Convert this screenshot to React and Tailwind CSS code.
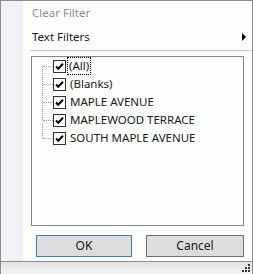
import { useState } from 'react';

const items = ['(All)', '(Blanks)', 'MAPLE AVENUE', 'MAPLEWOOD TERRACE', 'SOUTH MAPLE AVENUE'];

const CheckBox = ({ checked }) => (
  <svg width="13" height="13" viewBox="0 0 13 13" className="shrink-0">
    <rect x="0.5" y="0.5" width="12" height="12" fill="#ffffff" stroke="#333333" />
    {checked && (
      <path d="M3 6.5 L5.2 8.8 L10 3.8" fill="none" stroke="#000000" strokeWidth="2" />
    )}
  </svg>
);

const App = () => {
  const [checked, setChecked] = useState(items.map(() => true));

  const toggle = (i) => {
    if (i === 0) {
      const v = !checked[0];
      setChecked(items.map(() => v));
      return;
    }
    const next = [...checked];
    next[i] = !next[i];
    next[0] = next.slice(1).every(Boolean);
    setChecked(next);
  };

  return (
    <div
      className="w-[253px] h-[274px] flex flex-col border-l border-t border-r border-[#8c8c8c] bg-[#fbfdfb] text-[11.5px] text-[#1a1a1a] select-none"
      style={{ fontFamily: '"Noto Sans", "Open Sans", sans-serif' }}
    >
      <div className="flex flex-1">
        <div className="w-[22px] bg-[#f3f1f5]" />
        <div className="flex-1 flex flex-col">
          <div className="h-[23px] flex items-center pl-[9px] text-[#8f8f8f]">Clear Filter</div>
          <div className="h-[26px] flex items-center justify-between pl-[9px] pr-[6px]">
            <span>Text Filters</span>
            <span className="w-0 h-0 border-y-[4px] border-y-transparent border-l-[4px] border-l-black" />
          </div>
          <div className="ml-[7px] h-px bg-[#c8c8c8]" />

          <div className="ml-[8px] mt-[5px] w-[213px] h-[170px] border border-[#828790] bg-[#fbfdfb] relative">
            <div className="absolute left-[10px] top-[8px] h-[73px] border-l border-dotted border-[#a0a0a0]" />
            {items.map((label, i) => (
              <div
                key={label}
                className="h-[18px] flex items-center cursor-default"
                onClick={() => toggle(i)}
              >
                <div className="w-[10px] ml-[11px] border-t border-dotted border-[#a0a0a0]" />
                <CheckBox checked={checked[i]} />
                <span
                  className={
                    i === 0
                      ? 'ml-[1px] h-[18px] px-[1px] flex items-center border border-dotted border-black'
                      : 'ml-[2px] px-[1px] border border-transparent'
                  }
                >
                  {label}
                </span>
              </div>
            ))}
          </div>

          <div className="flex mt-[9px] ml-[13px] gap-[14px]">
            <button className="w-[96px] h-[22px] border border-[#3c7fb1] bg-[#dddddd] text-[12px] leading-none">
              OK
            </button>
            <button className="w-[98px] h-[22px] border border-[#707070] bg-[#dddddd] text-[12px] leading-none">
              Cancel
            </button>
          </div>
          <div className="flex-1" />
        </div>
      </div>
      <div className="h-[13px] border-t border-[#8c8c8c] bg-gradient-to-b from-[#e2e2e2] to-[#f3f3f3] flex justify-end items-end pr-[2px] pb-[2px]">
        <svg width="8" height="8" viewBox="0 0 8 8">
          <rect x="6" y="0" width="2" height="2" fill="#333" />
          <rect x="3" y="3" width="2" height="2" fill="#333" />
          <rect x="6" y="3" width="2" height="2" fill="#333" />
          <rect x="0" y="6" width="2" height="2" fill="#333" />
          <rect x="3" y="6" width="2" height="2" fill="#333" />
          <rect x="6" y="6" width="2" height="2" fill="#333" />
        </svg>
      </div>
    </div>
  );
};

export default App;
